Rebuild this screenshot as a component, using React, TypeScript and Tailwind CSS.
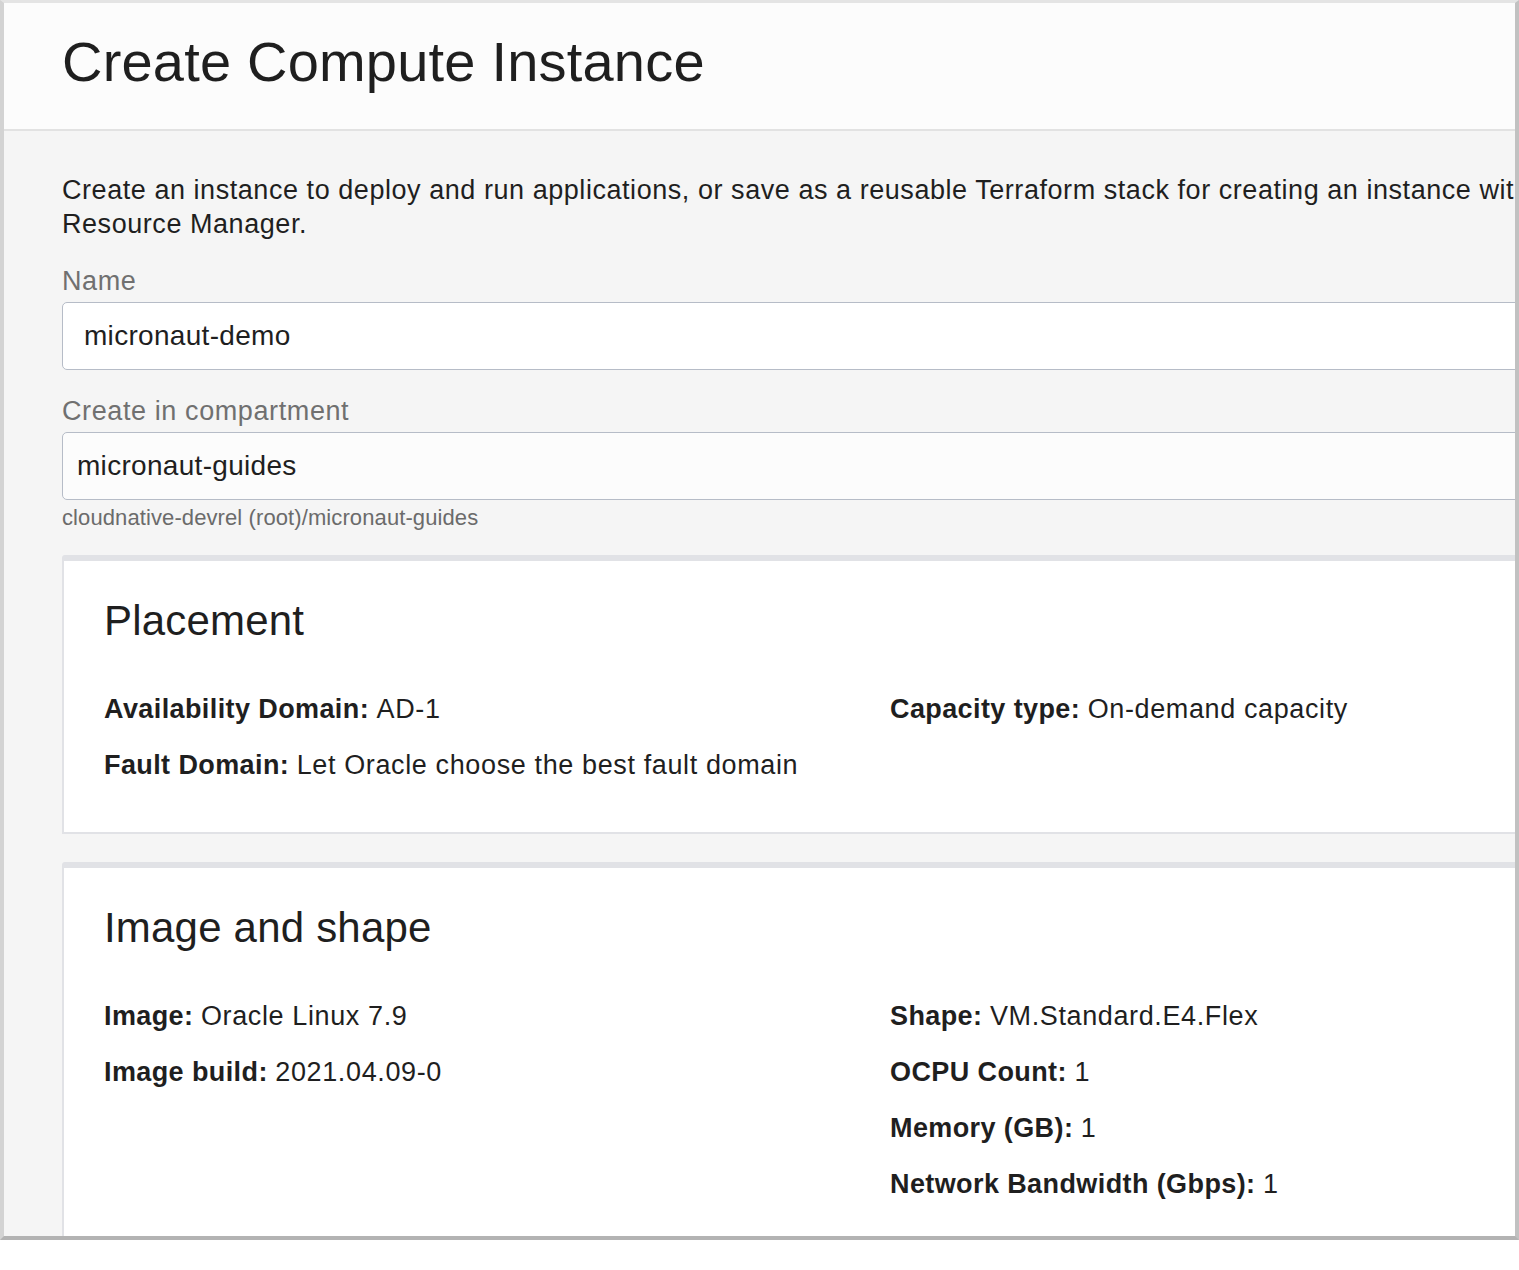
import React from 'react';

const font = { fontFamily: '"Liberation Sans", Arial, Helvetica, sans-serif' };

interface Field {
  label: string;
  value: string;
}

function Row({ label, value }: Field) {
  return (
    <div className="text-[27px] leading-[34px] text-[#1f1f1f] whitespace-nowrap">
      <span className="font-bold tracking-[0.4px]">{label}</span>{' '}
      <span className="tracking-[0.62px]">{value}</span>
    </div>
  );
}

function Card({ title, left, right }: { title: string; left: Field[]; right: Field[] }) {
  return (
    <div className="bg-white border-t-[6px] border-l-2 border-b-2 border-[#e1e2e6] rounded-tl-[3px] pl-[40px] pt-[35px] pb-[50px]">
      <h2 className="text-[42px] leading-[50px] text-[#1f1f1f] font-normal tracking-[0.2px]">{title}</h2>
      <div className="mt-[46px] grid grid-cols-[786px_1fr]">
        <div className="flex flex-col gap-[22px]">
          {left.map((f) => (
            <Row key={f.label} {...f} />
          ))}
        </div>
        <div className="flex flex-col gap-[22px]">
          {right.map((f) => (
            <Row key={f.label} {...f} />
          ))}
        </div>
      </div>
    </div>
  );
}

export default function App() {
  return (
    <div className="w-[1519px] h-[1270px] bg-white" style={font}>
      {/* screenshot frame */}
      <div className="w-[1519px] h-[1240px] overflow-hidden border-t-[3px] border-t-[#e4e4e4] border-l-4 border-l-[#d3d3d3] border-r-4 border-r-[#c1c1c1] border-b-4 border-b-[#b3b3b3] bg-[#f5f5f5]">
        <div className="w-[1760px]">
          {/* Header */}
          <div className="h-[128px] bg-[#fcfcfc] border-b-2 border-[#e2e2e2] flex items-center pl-[58px] pb-[8px]">
            <h1 className="text-[56px] leading-[64px] text-[#1f1f1f] font-normal tracking-[0.2px]">Create Compute Instance</h1>
          </div>

          {/* Body */}
          <div className="pl-[58px] pt-[42px]">
            <p className="w-[1560px] text-[27px] leading-[34px] text-[#1f1f1f] tracking-[0.55px]">
              Create an instance to deploy and run applications, or save as a reusable Terraform stack for creating an instance with Resource Manager.
            </p>

            <div className="w-[1660px]">
              <label className="block mt-[23px] text-[27px] leading-[34px] text-[#707070] tracking-[0.6px]">Name</label>
              <div className="mt-[4px] h-[68px] bg-white border border-[#b6bcc7] rounded-[5px] flex items-center pl-[21px] text-[28px] text-[#1f1f1f] tracking-[0.3px]">
                micronaut-demo
              </div>

              <label className="block mt-[24px] text-[27px] leading-[34px] text-[#707070] tracking-[0.6px]">Create in compartment</label>
              <div className="mt-[4px] h-[68px] bg-[#fcfcfc] border border-[#b6bcc7] rounded-[5px] flex items-center pl-[14px] text-[28px] text-[#1f1f1f] tracking-[0.3px]">
                micronaut-guides
              </div>
              <div className="mt-[5px] text-[22px] leading-[26px] text-[#6b6b6b] tracking-[0.1px]">cloudnative-devrel (root)/micronaut-guides</div>

              <div className="mt-[24px] flex flex-col gap-[28px]">
                <Card
                  title="Placement"
                  left={[
                    { label: 'Availability Domain:', value: 'AD-1' },
                    { label: 'Fault Domain:', value: 'Let Oracle choose the best fault domain' },
                  ]}
                  right={[{ label: 'Capacity type:', value: 'On-demand capacity' }]}
                />
                <Card
                  title="Image and shape"
                  left={[
                    { label: 'Image:', value: 'Oracle Linux 7.9' },
                    { label: 'Image build:', value: '2021.04.09-0' },
                  ]}
                  right={[
                    { label: 'Shape:', value: 'VM.Standard.E4.Flex' },
                    { label: 'OCPU Count:', value: '1' },
                    { label: 'Memory (GB):', value: '1' },
                    { label: 'Network Bandwidth (Gbps):', value: '1' },
                  ]}
                />
              </div>
            </div>
          </div>
        </div>
      </div>
    </div>
  );
}
